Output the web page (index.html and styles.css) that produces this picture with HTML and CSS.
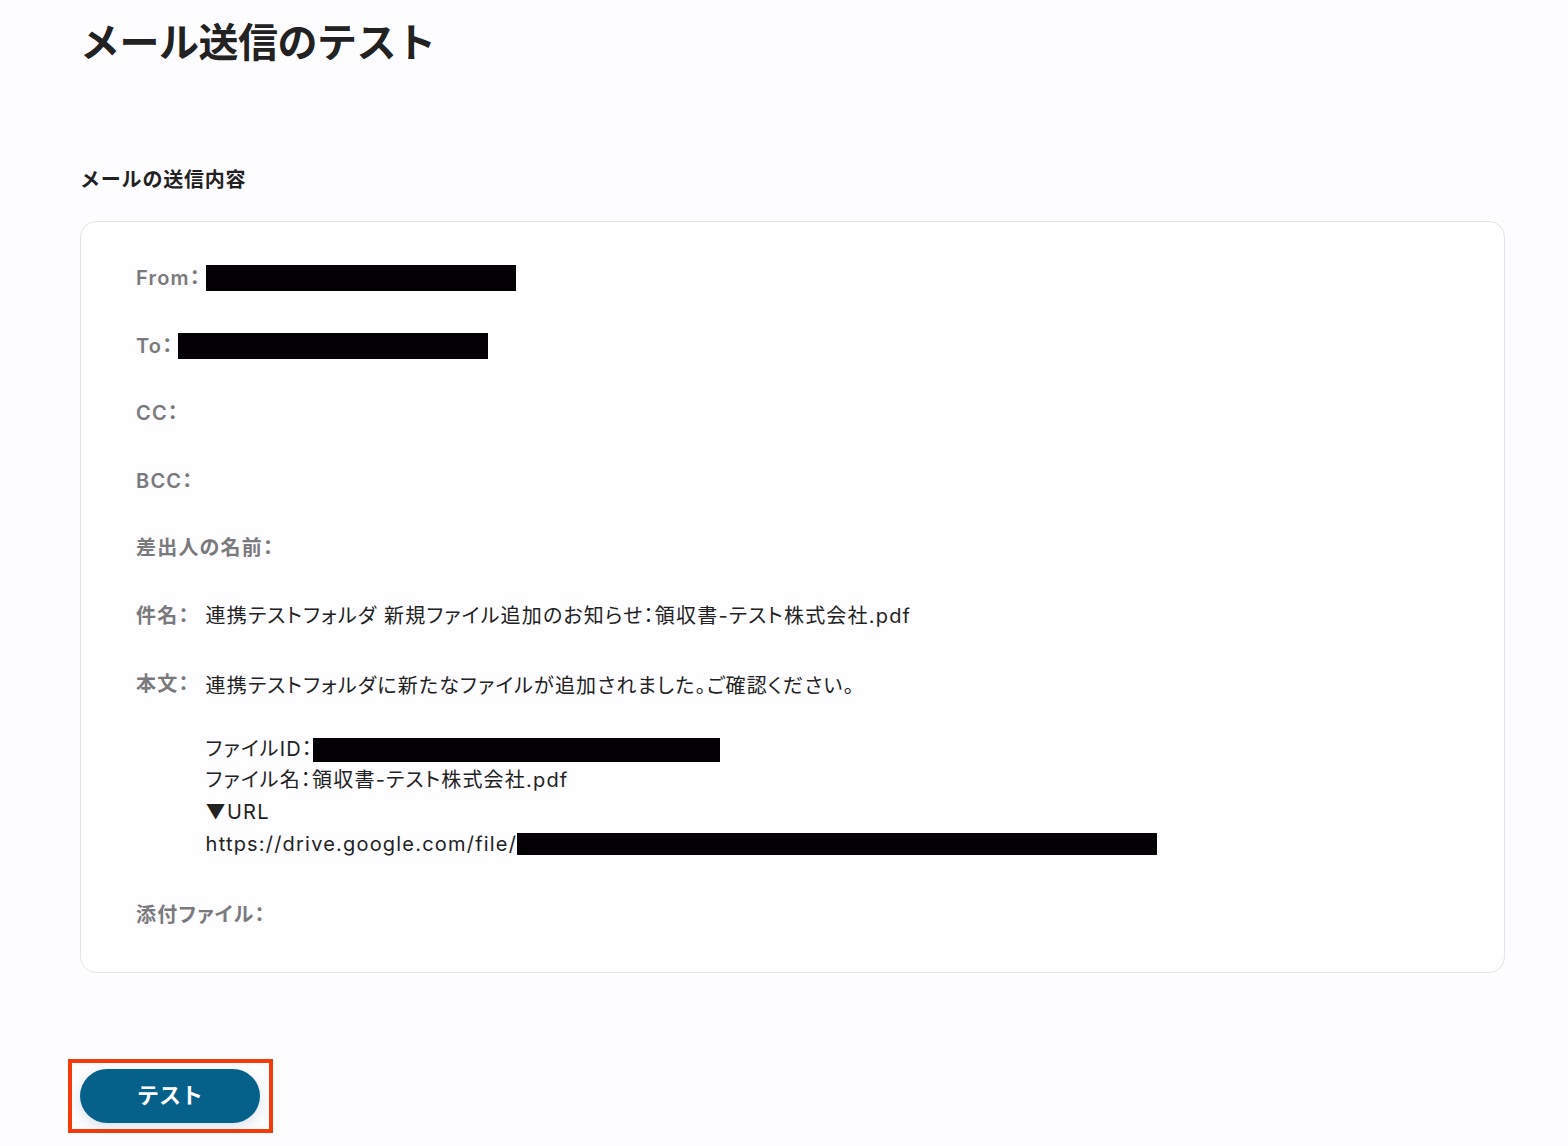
FILE: index.html
```html
<!DOCTYPE html>
<html lang="ja">
<head>
    <meta charset="UTF-8">
    <title>メール送信のテスト</title>
    <link rel="stylesheet" href="styles.css">
</head>
<body>
    <h1>メール送信のテスト</h1>

    <h2 class="section-title">メールの送信内容</h2>

    <div class="mail-card">
        <div class="row">
            <span class="label">From：</span>
            <span class="value"><span class="redact redact-from"></span></span>
        </div>
        <div class="row">
            <span class="label">To：</span>
            <span class="value"><span class="redact redact-to"></span></span>
        </div>
        <div class="row">
            <span class="label">CC：</span>
        </div>
        <div class="row">
            <span class="label">BCC：</span>
        </div>
        <div class="row">
            <span class="label">差出人の名前：</span>
        </div>
        <div class="row">
            <span class="label">件名：</span>
            <span class="value gap">連携テストフォルダ 新規ファイル追加のお知らせ：領収書-テスト株式会社.pdf</span>
        </div>
        <div class="row body-row">
            <span class="label">本文：</span>
            <div class="value gap body-text">
                <div class="line">連携テストフォルダに新たなファイルが追加されました。ご確認ください。</div>
                <div class="line">&nbsp;</div>
                <div class="line">ファイルID：<span class="redact redact-id"></span></div>
                <div class="line">ファイル名：領収書-テスト株式会社.pdf</div>
                <div class="line">▼URL</div>
                <div class="line">https://drive.google.com/file/<span class="redact redact-url"></span></div>
            </div>
        </div>
        <div class="row">
            <span class="label">添付ファイル：</span>
        </div>
    </div>

    <div class="actions">
        <div class="highlight">
            <button class="test-btn">テスト</button>
        </div>
    </div>
</body>
</html>
```

FILE: styles.css
```css
body {
    margin: 0;
    padding: 0 63px 0 80px;
    background: #fdfcfe;
    font-family: Inter, "Noto Sans CJK JP", sans-serif;
    color: #222;
}

h1 {
    margin: 15px 0 0;
    font-size: 40px;
    line-height: 56px;
    font-weight: 700;
    color: #222;
    letter-spacing: -0.5px;
}

.section-title {
    margin: 95px 0 0;
    font-size: 20px;
    line-height: 28px;
    font-weight: 700;
    letter-spacing: 0.8px;
    color: #222;
}

.mail-card {
    margin-top: 27px;
    padding: 40px 55px 41px;
    background: #fefdff;
    border: 1px solid #e4e3e8;
    border-radius: 16px;
    display: flex;
    flex-direction: column;
    gap: 35.6px;
}

.row {
    display: flex;
    align-items: flex-start;
    font-size: 20px;
    line-height: 32px;
    font-feature-settings: "palt";
    letter-spacing: 1.2px;
}

.label {
    color: #7a7a7d;
    font-weight: 600;
    white-space: nowrap;
}

.value {
    margin-left: 5px;
    color: #222;
    font-weight: 400;
}

.value.gap {
    margin-left: 16px;
}

.body-row {
    margin-bottom: 3px;
}

.body-text {
    padding-top: 3px;
}

.body-text .line {
    line-height: 31.6px;
}

.redact {
    display: inline-block;
    background: #030104;
    height: 26px;
    vertical-align: -6px;
}

.redact-from { width: 310px; }
.redact-to { width: 310px; }
.redact-id { width: 407px; height: 24px; }
.redact-url { width: 640px; height: 22px; vertical-align: -4px; }

.actions {
    margin-top: 86px;
}

.highlight {
    display: inline-block;
    margin-left: -12px;
    padding: 6px 9px 6px 8px;
    border: 4px solid #f53b0c;
}

.test-btn {
    display: block;
    width: 180px;
    height: 54px;
    padding: 0 0 5px;
    border: none;
    border-radius: 27px;
    background: #06618a;
    color: #fff;
    font-family: Inter, "Noto Sans CJK JP", sans-serif;
    font-size: 22px;
    font-weight: 700;
    box-shadow: 0 4px 12px rgba(6, 97, 138, 0.15);
    cursor: pointer;
}
```
